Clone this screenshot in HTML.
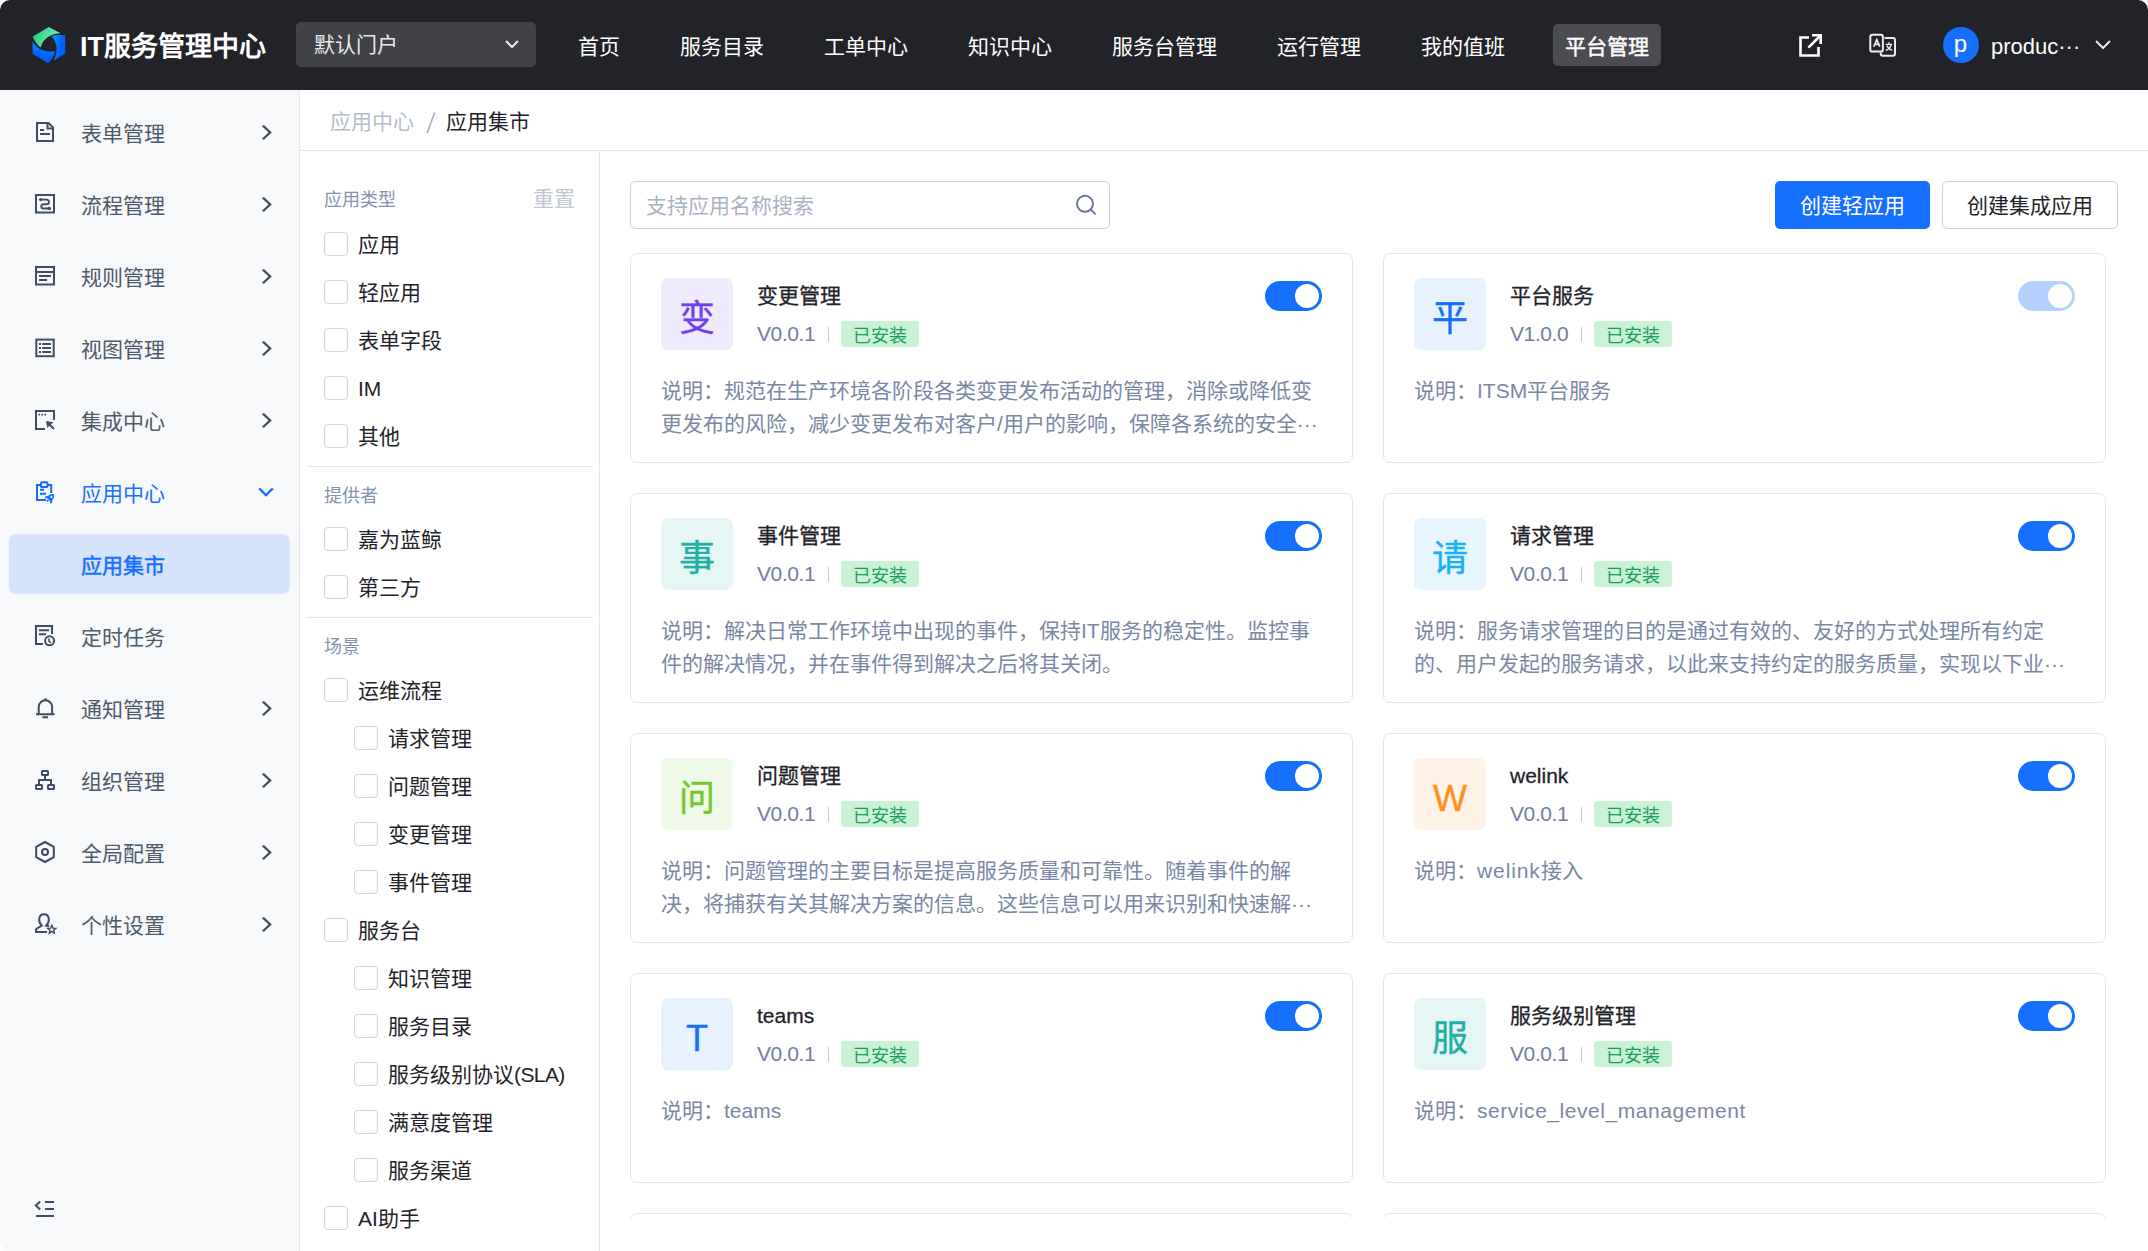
<!DOCTYPE html>
<html lang="zh-CN">
<head>
<meta charset="utf-8">
<title>IT服务管理中心</title>
<style>
*{box-sizing:border-box;margin:0;padding:0}
html,body{width:2148px;height:1251px;overflow:hidden;background:#fff}
body{font-family:"Liberation Sans",sans-serif;font-size:21px;color:#1f2329;position:relative}
#app{position:absolute;left:0;top:0;width:2148px;height:1251px;background:#fff;border-radius:10px;overflow:hidden}
/* header */
#hd{position:absolute;left:0;top:0;width:2148px;height:90px;background:#222328;color:#fff}
#logo{position:absolute;left:31px;top:26px;width:36px;height:40px}
#ttl{position:absolute;left:80px;top:27px;line-height:40px;font-size:27px;font-weight:bold;white-space:nowrap;letter-spacing:0}
#portal{position:absolute;left:296px;top:22px;width:240px;height:45px;border-radius:5px;background:#414248}
#portal span{position:absolute;left:18px;top:0;line-height:45px;font-size:21px;color:#e8e9eb}
#portal svg{position:absolute;left:208px;top:17px}
.nav{position:absolute;top:24px;height:42px;line-height:45px;padding:0 12px;font-size:21px;color:#fff;white-space:nowrap;border-radius:5px}
.nav.on{background:#4b4c52;-webkit-text-stroke:0.45px #fff}
/* sidebar */
#sb{position:absolute;left:0;top:90px;width:300px;height:1161px;background:#f6f8fa;border-right:1px solid #e5e7eb}
.mi{position:absolute;left:0;width:299px;height:72px;line-height:72px;color:#4e5969}
.mi .t{position:absolute;left:81px;top:2px;font-size:21px;white-space:nowrap}
.mi svg.ic{position:absolute;left:33px;top:24px}
.mi svg.ar{position:absolute;left:258px;top:27px}
.mi.on{color:#1670ff}
#sub{position:absolute;left:9px;top:444px;width:281px;height:60px;border-radius:7px;background:#d5e3fb;color:#1670ff;line-height:60px}
#sub span{position:absolute;left:72px;top:2px;-webkit-text-stroke:0.5px #1670ff}
/* breadcrumb */
#bc{position:absolute;left:300px;top:90px;width:1848px;height:61px;border-bottom:1px solid #dfe1e8;background:#fff}
#bc span{position:absolute;top:0;line-height:64px;font-size:21px;white-space:nowrap}
/* filter */
#ft{position:absolute;left:300px;top:151px;width:300px;height:1100px;border-right:1px solid #e3e5ea;background:#fff}
.fh{position:absolute;left:24px;font-size:18px;color:#8593ad;line-height:30px;white-space:nowrap}
.cb{position:absolute;width:24px;height:24px;border:1px solid #cfd6e3;border-radius:4px;background:#fff}
.cl{position:absolute;line-height:30px;font-size:21px;color:#1f2329;white-space:nowrap}
.dv{position:absolute;left:6px;width:287px;height:1px;background:#e5e7ed}
/* main */
#mn{position:absolute;left:600px;top:151px;width:1548px;height:1100px;background:#fff}
#srch{position:absolute;left:30px;top:30px;width:480px;height:48px;border:1px solid #cdd1da;border-radius:5px}
#srch span{position:absolute;left:15px;top:0;line-height:48px;color:#a9b2c3;font-size:21px}
#srch svg{position:absolute;left:443px;top:11px}
.btn{position:absolute;top:30px;height:48px;line-height:50px;text-align:center;font-size:21px;border-radius:5px;white-space:nowrap}
#b1{left:1175px;width:155px;background:#1670ff;color:#fff}
#b2{left:1342px;width:176px;border:1px solid #cdd1da;color:#1f2329;line-height:48px}
#list{position:absolute;left:0;top:95px;width:1548px;height:972px;overflow:hidden}
.cd{position:absolute;width:723px;height:210px;border:1px solid #e4e6ed;border-radius:7px;background:#fff}
.cd .ib{position:absolute;left:30px;top:24px;width:72px;height:72px;border-radius:7px;text-align:center;line-height:81px;font-size:36px;-webkit-text-stroke:0.4px}
.cd .nm{position:absolute;left:126px;top:27px;line-height:30px;font-size:21px;-webkit-text-stroke:0.3px #1f2329;color:#1f2329;white-space:nowrap}
.cd .vr{position:absolute;left:126px;top:65px;line-height:30px;font-size:21px;color:#6f7e9d;white-space:nowrap;letter-spacing:-0.4px}
.cd .sp{position:absolute;left:197px;top:73px;width:1px;height:15px;background:#c5cad6}
.cd .tg{position:absolute;left:210px;top:67px;width:78px;height:26px;line-height:30px;border-radius:3px;background:#caf2d5;color:#17a05a;font-size:18px;text-align:center}
.cd .sw{position:absolute;left:634px;top:27px;width:57px;height:30px;border-radius:15px;background:#1670ff}
.cd .sw i{position:absolute;left:30px;top:3px;width:24px;height:24px;border-radius:12px;background:#fff}
.cd .sw.dis{background:#b5d0fd}
.cd .ds{position:absolute;left:30px;top:120px;width:663px;line-height:33px;font-size:21px;color:#7a87a4;height:66px;overflow:hidden}
.cr{position:absolute;width:16px;height:16px;background:#000}
</style>
</head>
<body>
<div id="app">
<div id="hd">
<svg id="logo" style="left:24px;top:20px;width:50px;height:50px" viewBox="0 0 50 50">
<defs>
<linearGradient id="g1" x1="0" y1="0.3" x2="1" y2="0.7"><stop offset="0" stop-color="#1bcf7c"/><stop offset="1" stop-color="#86f3c4"/></linearGradient>
<linearGradient id="g2" x1="0" y1="0.2" x2="1" y2="0.6"><stop offset="0" stop-color="#0a9bff"/><stop offset="0.7" stop-color="#0060ff"/></linearGradient>
<linearGradient id="g3" x1="0.6" y1="0" x2="0.4" y2="1"><stop offset="0.1" stop-color="#0a9bff"/><stop offset="0.6" stop-color="#0060ff"/></linearGradient>
</defs>
<path d="M8.8,16.4 L24.8,6.9 L36.6,13.3 C28,13.2 18.6,18.6 16.6,27.6 C13,24.6 10.4,20.8 8.8,16.4Z" fill="url(#g1)"/>
<path d="M27.4,16.2 C31.5,14.6 37,14.8 41.2,15.3 L41.2,33.6 L29.4,40.8 C34.4,32.4 33.6,22.6 27.4,16.2Z" fill="url(#g2)"/>
<path d="M8.6,21.4 C12,27.8 20.4,32.8 31,31.2 C30,36 27.6,40 24.4,43.2 L8.6,33.8Z" fill="url(#g3)"/>
</svg>
<div id="ttl">IT服务管理中心</div>
<div id="portal"><span>默认门户</span><svg width="16" height="10" viewBox="0 0 16 10"><path d="M2 2 L8 8 L14 2" fill="none" stroke="#e8e9eb" stroke-width="2"/></svg></div>
<div class="nav" style="left:566px">首页</div>
<div class="nav" style="left:668px">服务目录</div>
<div class="nav" style="left:812px">工单中心</div>
<div class="nav" style="left:956px">知识中心</div>
<div class="nav" style="left:1100px">服务台管理</div>
<div class="nav" style="left:1265px">运行管理</div>
<div class="nav" style="left:1409px">我的值班</div>
<div class="nav on" style="left:1553px">平台管理</div>
<svg style="position:absolute;left:1797px;top:32px" width="27" height="27" viewBox="0 0 27 27" fill="none" stroke="#fff" stroke-width="2.6"><path d="M12 5.5 H3.5 V23.5 H21.5 V15"/><path d="M11.4 15.6 L23.5 3.5"/><path d="M15 3.3 H23.7 V12"/></svg>
<svg style="position:absolute;left:1867px;top:31px" width="32" height="30" viewBox="0 0 32 30" fill="none" stroke="#ececee" stroke-width="2"><path d="M17.6 7 H25.8 a2.2 2.2 0 0 1 2.2 2.2 V22.6 a2.2 2.2 0 0 1 -2.2 2.2 H15.9 a2.2 2.2 0 0 1 -2.2 -2.2 V21.5"/><rect x="3.3" y="3.7" width="12.6" height="16.9" rx="2.2"/><path d="M6.8 15.6 L9.8 8.6 L12.8 15.6 M7.8 13.3 H11.8" stroke-width="1.7"/><path d="M18.6 13.4 H25.2 M21.9 11.3 V13.4 M24.2 13.6 C23.4 16.6 21 18.6 18.8 19.5 M19.8 14.6 C20.8 16.8 22.8 18.6 25.2 19.4" stroke-width="1.4"/></svg>
<div style="position:absolute;left:1942.5px;top:27px;width:36px;height:36px;border-radius:18px;background:#1670ff;color:#fff;text-align:center;line-height:33px;font-size:24px">p</div>
<div style="position:absolute;left:1991px;top:25.5px;line-height:42px;font-size:22px;color:#fff;white-space:nowrap">produc···</div>
<svg style="position:absolute;left:2094px;top:39px" width="18" height="11" viewBox="0 0 18 11"><path d="M2 2 L9 9 L16 2" fill="none" stroke="#e8e9eb" stroke-width="2"/></svg>
</div>
<div id="sb">
<div class="mi" style="top:6px"><svg style="position:absolute;left:30px;top:20px" width="30" height="32" viewBox="30 116 30 32" fill="none" stroke="#3f4c62" stroke-width="2"><path d="M48.5 123 H37 V141 H53 V127.5 Z" stroke-linejoin="miter"/><path d="M47.5 123 V128.5 H53"/><path d="M40 130 H44 M40 134 H50"/></svg><span class="t">表单管理</span><svg style="position:absolute;left:256px;top:26px" width="20" height="20" viewBox="0 0 20 20" fill="none" stroke="#3f4c62" stroke-width="2.2"><path d="M6.9 3.6 L14.2 10.4 L6.9 17.3"/></svg></div>
<div class="mi" style="top:78px"><svg style="position:absolute;left:30px;top:20px" width="30" height="32" viewBox="30 188 30 32" fill="none" stroke="#3f4c62" stroke-width="2"><rect x="36" y="195" width="18" height="17.5"/><path d="M41 199.6 H46.6 A2.35 2.35 0 0 1 46.6 204.3 H43.4 A2.1 2.1 0 0 0 43.4 208.5 H49" stroke-width="1.9"/><circle cx="40.7" cy="199.6" r="1.7" fill="#3f4c62" stroke="none"/><circle cx="49.3" cy="208.5" r="1.8" fill="#3f4c62" stroke="none"/></svg><span class="t">流程管理</span><svg style="position:absolute;left:256px;top:26px" width="20" height="20" viewBox="0 0 20 20" fill="none" stroke="#3f4c62" stroke-width="2.2"><path d="M6.9 3.6 L14.2 10.4 L6.9 17.3"/></svg></div>
<div class="mi" style="top:150px"><svg style="position:absolute;left:30px;top:20px" width="30" height="32" viewBox="30 260 30 32" fill="none" stroke="#3f4c62" stroke-width="2"><rect x="36" y="267" width="18" height="17.5"/><path d="M36 272 H54 M39 276 H51 M39 280 H47"/></svg><span class="t">规则管理</span><svg style="position:absolute;left:256px;top:26px" width="20" height="20" viewBox="0 0 20 20" fill="none" stroke="#3f4c62" stroke-width="2.2"><path d="M6.9 3.6 L14.2 10.4 L6.9 17.3"/></svg></div>
<div class="mi" style="top:222px"><svg style="position:absolute;left:30px;top:20px" width="30" height="32" viewBox="30 332 30 32" fill="none" stroke="#3f4c62" stroke-width="2"><rect x="36.3" y="339.6" width="17.4" height="16.6"/><path d="M39 344 H41 M42.2 344 H51 M39 348 H41 M42.2 348 H51 M39 352 H41 M42.2 352 H51"/></svg><span class="t">视图管理</span><svg style="position:absolute;left:256px;top:26px" width="20" height="20" viewBox="0 0 20 20" fill="none" stroke="#3f4c62" stroke-width="2.2"><path d="M6.9 3.6 L14.2 10.4 L6.9 17.3"/></svg></div>
<div class="mi" style="top:294px"><svg style="position:absolute;left:30px;top:20px" width="30" height="32" viewBox="30 404 30 32" fill="none" stroke="#3f4c62" stroke-width="2"><path d="M45 429 H36 V411 H54 V420"/><path d="M38.4 414.7 h1.6 M41.4 414.7 h1.6 M44.4 414.7 h1.6" stroke-width="1.8"/><path d="M46 421 L53.4 422.3 L47.3 427.8 Z" fill="#3f4c62" stroke="none"/><path d="M49.5 424.5 L54 429"/></svg><span class="t">集成中心</span><svg style="position:absolute;left:256px;top:26px" width="20" height="20" viewBox="0 0 20 20" fill="none" stroke="#3f4c62" stroke-width="2.2"><path d="M6.9 3.6 L14.2 10.4 L6.9 17.3"/></svg></div>
<div class="mi on" style="top:366px"><svg style="position:absolute;left:30px;top:20px" width="30" height="32" viewBox="30 476 30 32" fill="none" stroke="#1768ff" stroke-width="2"><path d="M41 485 H37 V500 H46 M47.5 485 H51.2 V493"/><rect x="41" y="482.3" width="6.5" height="4.8" rx="1.2"/><path d="M40 489.8 H44 M40 493.8 H46"/><g transform="translate(50.3 498) rotate(45)" stroke="none" fill="#1670ff"><path d="M0 -5.2 C3.2 -3.4 3.3 0.4 2.4 2.4 H-2.4 C-3.3 0.4 -3.2 -3.4 0 -5.2 Z"/><path d="M-2.6 -0.2 L-4.6 2.3 L-3.9 3.9 L-2 2.6 Z M2.6 -0.2 L4.6 2.3 L3.9 3.9 L2 2.6 Z M-1.1 3.1 H1.1 V4.7 H-1.1 Z"/><circle cx="0" cy="-1.5" r="1.05" fill="#f6f8fa"/></g></svg><span class="t">应用中心</span><svg style="position:absolute;left:256px;top:26px" width="20" height="20" viewBox="0 0 20 20" fill="none" stroke="#1768ff" stroke-width="2.2"><path d="M3.2 6.4 L10 13.2 L16.8 6.4"/></svg></div>
<div id="sub"><span>应用集市</span></div>
<div class="mi" style="top:510px"><svg style="position:absolute;left:30px;top:20px" width="30" height="32" viewBox="30 620 30 32" fill="none" stroke="#3f4c62" stroke-width="2"><path d="M43 644 H36 V626 H52 V634"/><path d="M39 630.3 H49 M39 634.3 H46"/><circle cx="49.6" cy="640.8" r="4.5"/><path d="M49 638.6 V641.4 L51 642.6" stroke-width="1.6"/></svg><span class="t">定时任务</span></div>
<div class="mi" style="top:582px"><svg style="position:absolute;left:30px;top:20px" width="30" height="32" viewBox="30 692 30 32" fill="none" stroke="#3f4c62" stroke-width="2"><path d="M38.7 714 V707 A6.7 6.7 0 0 1 52.1 707 V714"/><path d="M36 714.3 H54.6 M42.4 717.3 H48 M45.4 698.2 V700.4"/></svg><span class="t">通知管理</span><svg style="position:absolute;left:256px;top:26px" width="20" height="20" viewBox="0 0 20 20" fill="none" stroke="#3f4c62" stroke-width="2.2"><path d="M6.9 3.6 L14.2 10.4 L6.9 17.3"/></svg></div>
<div class="mi" style="top:654px"><svg style="position:absolute;left:30px;top:20px" width="30" height="32" viewBox="30 764 30 32" fill="none" stroke="#3f4c62" stroke-width="2"><rect x="42" y="771" width="6" height="4" rx="0.6"/><rect x="36" y="785" width="6" height="4" rx="0.6"/><rect x="48" y="785" width="6" height="4" rx="0.6"/><path d="M45 775.5 V780 M39 784.5 V780 H51 V784.5"/></svg><span class="t">组织管理</span><svg style="position:absolute;left:256px;top:26px" width="20" height="20" viewBox="0 0 20 20" fill="none" stroke="#3f4c62" stroke-width="2.2"><path d="M6.9 3.6 L14.2 10.4 L6.9 17.3"/></svg></div>
<div class="mi" style="top:726px"><svg style="position:absolute;left:30px;top:20px" width="30" height="32" viewBox="30 836 30 32" fill="none" stroke="#3f4c62" stroke-width="2"><path d="M45 842 L53.8 846.8 V857.2 L45 862 L36.2 857.2 V846.8 Z"/><circle cx="45" cy="852" r="3"/></svg><span class="t">全局配置</span><svg style="position:absolute;left:256px;top:26px" width="20" height="20" viewBox="0 0 20 20" fill="none" stroke="#3f4c62" stroke-width="2.2"><path d="M6.9 3.6 L14.2 10.4 L6.9 17.3"/></svg></div>
<div class="mi" style="top:798px"><svg style="position:absolute;left:30px;top:20px" width="32" height="32" viewBox="30 908 32 32" fill="none" stroke="#3f4c62" stroke-width="2"><path d="M47 932 H36 V929.5 C37 927.5 40.5 927 41.8 925.6 C40 924 39 921.5 39.2 919 C39.4 915.8 41.5 914.2 44 914.2 C46.5 914.2 48.6 915.8 48.8 919 C49 921.5 48 924 46.2 925.6 L49.2 926.2"/><path d="M51.8 925.3 L52.9 928.1 L55.9 928.3 L53.6 930.2 L54.3 933.1 L51.8 931.5 L49.3 933.1 L50.0 930.2 L47.7 928.3 L50.7 928.1 Z" stroke-width="1.4" stroke-linejoin="miter"/></svg><span class="t">个性设置</span><svg style="position:absolute;left:256px;top:26px" width="20" height="20" viewBox="0 0 20 20" fill="none" stroke="#3f4c62" stroke-width="2.2"><path d="M6.9 3.6 L14.2 10.4 L6.9 17.3"/></svg></div>
<svg style="position:absolute;left:30px;top:1103px" width="30" height="30" viewBox="30 1193 30 30" fill="none" stroke="#3f4c62" stroke-width="2"><path d="M45 1202 H54 M45 1209 H54 M36 1216 H54 M40.2 1201.4 L35.8 1205.4 L40.2 1209.4"/></svg>
</div>
<div id="bc"><span style="left:30px;color:#b4bccb">应用中心</span><svg style="position:absolute;left:124px;top:20px" width="14" height="26" viewBox="0 0 14 26"><path d="M3.2 23 L10.6 2.5" stroke="#a3adc0" stroke-width="1.6" fill="none"/></svg><span style="left:146px;color:#1f2329">应用集市</span></div>
<div id="ft">
<div class="fh" style="top:34px">应用类型</div>
<div style="position:absolute;left:233px;top:33px;line-height:30px;font-size:21px;color:#c0c6d2;white-space:nowrap">重置</div>
<div class="cb" style="left:24px;top:81px"></div><div class="cl" style="left:58px;top:79px">应用</div>
<div class="cb" style="left:24px;top:129px"></div><div class="cl" style="left:58px;top:127px">轻应用</div>
<div class="cb" style="left:24px;top:177px"></div><div class="cl" style="left:58px;top:175px">表单字段</div>
<div class="cb" style="left:24px;top:225px"></div><div class="cl" style="left:58px;top:223px">IM</div>
<div class="cb" style="left:24px;top:273px"></div><div class="cl" style="left:58px;top:271px">其他</div>
<div class="dv" style="top:315px"></div>
<div class="fh" style="top:330px">提供者</div>
<div class="cb" style="left:24px;top:376px"></div><div class="cl" style="left:58px;top:374px">嘉为蓝鲸</div>
<div class="cb" style="left:24px;top:424px"></div><div class="cl" style="left:58px;top:422px">第三方</div>
<div class="dv" style="top:466px"></div>
<div class="fh" style="top:481px">场景</div>
<div class="cb" style="left:24px;top:527px"></div><div class="cl" style="left:58px;top:525px">运维流程</div>
<div class="cb" style="left:54px;top:575px"></div><div class="cl" style="left:88px;top:573px">请求管理</div>
<div class="cb" style="left:54px;top:623px"></div><div class="cl" style="left:88px;top:621px">问题管理</div>
<div class="cb" style="left:54px;top:671px"></div><div class="cl" style="left:88px;top:669px">变更管理</div>
<div class="cb" style="left:54px;top:719px"></div><div class="cl" style="left:88px;top:717px">事件管理</div>
<div class="cb" style="left:24px;top:767px"></div><div class="cl" style="left:58px;top:765px">服务台</div>
<div class="cb" style="left:54px;top:815px"></div><div class="cl" style="left:88px;top:813px">知识管理</div>
<div class="cb" style="left:54px;top:863px"></div><div class="cl" style="left:88px;top:861px">服务目录</div>
<div class="cb" style="left:54px;top:911px"></div><div class="cl" style="left:88px;top:909px">服务级别协议<span style="letter-spacing:-0.6px">(SLA)</span></div>
<div class="cb" style="left:54px;top:959px"></div><div class="cl" style="left:88px;top:957px">满意度管理</div>
<div class="cb" style="left:54px;top:1007px"></div><div class="cl" style="left:88px;top:1005px">服务渠道</div>
<div class="cb" style="left:24px;top:1055px"></div><div class="cl" style="left:58px;top:1053px">AI助手</div>
</div>
<div id="mn">
<div id="srch"><span>支持应用名称搜索</span><svg width="26" height="26" viewBox="0 0 26 26" fill="none" stroke="#63759a" stroke-width="1.9"><circle cx="11" cy="10.8" r="8"/><path d="M16.8 16.6 L21.6 21.4"/></svg></div>
<div class="btn" id="b1">创建轻应用</div>
<div class="btn" id="b2">创建集成应用</div>
<div id="list">
<div class="cd" style="left:30px;top:7px"><div class="ib" style="background:#f0ebfc;color:#7040f0">变</div><div class="nm">变更管理</div><div class="vr">V0.0.1</div><div class="sp"></div><div class="tg">已安装</div><div class="sw"><i></i></div><div class="ds">说明：规范在生产环境各阶段各类变更发布活动的管理，消除或降低变<br>更发布的风险，减少变更发布对客户/用户的影响，保障各系统的安全···</div></div>
<div class="cd" style="left:783px;top:7px"><div class="ib" style="background:#e8f1fe;color:#1670ff">平</div><div class="nm">平台服务</div><div class="vr">V1.0.0</div><div class="sp"></div><div class="tg">已安装</div><div class="sw dis"><i></i></div><div class="ds">说明：ITSM平台服务</div></div>
<div class="cd" style="left:30px;top:247px"><div class="ib" style="background:#e6f6f5;color:#1fb0a6">事</div><div class="nm">事件管理</div><div class="vr">V0.0.1</div><div class="sp"></div><div class="tg">已安装</div><div class="sw"><i></i></div><div class="ds">说明：解决日常工作环境中出现的事件，保持IT服务的稳定性。监控事<br>件的解决情况，并在事件得到解决之后将其关闭。</div></div>
<div class="cd" style="left:783px;top:247px"><div class="ib" style="background:#e6f5fe;color:#19b2f5">请</div><div class="nm">请求管理</div><div class="vr">V0.0.1</div><div class="sp"></div><div class="tg">已安装</div><div class="sw"><i></i></div><div class="ds">说明：服务请求管理的目的是通过有效的、友好的方式处理所有约定<br>的、用户发起的服务请求，以此来支持约定的服务质量，实现以下业···</div></div>
<div class="cd" style="left:30px;top:487px"><div class="ib" style="background:#eef9e8;color:#76c82a">问</div><div class="nm">问题管理</div><div class="vr">V0.0.1</div><div class="sp"></div><div class="tg">已安装</div><div class="sw"><i></i></div><div class="ds">说明：问题管理的主要目标是提高服务质量和可靠性。随着事件的解<br>决，将捕获有关其解决方案的信息。这些信息可以用来识别和快速解···</div></div>
<div class="cd" style="left:783px;top:487px"><div class="ib" style="background:#fff2e6;color:#ff8f1f">W</div><div class="nm">welink</div><div class="vr">V0.0.1</div><div class="sp"></div><div class="tg">已安装</div><div class="sw"><i></i></div><div class="ds">说明：<span style="letter-spacing:0.9px">welink</span>接入</div></div>
<div class="cd" style="left:30px;top:727px"><div class="ib" style="background:#e8f1fe;color:#1670ff">T</div><div class="nm">teams</div><div class="vr">V0.0.1</div><div class="sp"></div><div class="tg">已安装</div><div class="sw"><i></i></div><div class="ds">说明：teams</div></div>
<div class="cd" style="left:783px;top:727px"><div class="ib" style="background:#e6f6f5;color:#1fb0a6">服</div><div class="nm">服务级别管理</div><div class="vr">V0.0.1</div><div class="sp"></div><div class="tg">已安装</div><div class="sw"><i></i></div><div class="ds">说明：<span style="letter-spacing:0.55px">service_level_management</span></div></div>
<div class="cd" style="left:30px;top:967px"></div>
<div class="cd" style="left:783px;top:967px"></div>
</div>
</div>
</div>
</body>
</html>
